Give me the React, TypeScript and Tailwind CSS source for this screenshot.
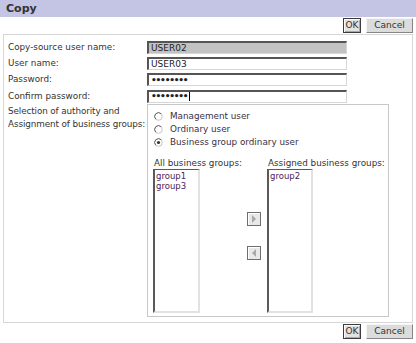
import React from "react";

function Btn({ label, primary, w }: { label: string; primary?: boolean; w: string }) {
    return (
        <div
            className={`${w} h-[15px] flex items-center justify-center text-[9px] leading-none text-[#333] ${
                primary
                    ? "border border-[#3c3c3c] bg-[#e2e2e2] shadow-[inset_1px_1px_0_#fafafa,inset_-1px_-1px_0_#a8a8a8]"
                    : "border border-t-[#f4f4f4] border-l-[#f4f4f4] border-r-[#858585] border-b-[#858585] bg-[#dcdcdc]"
            }`}
        >
            {label}
        </div>
    );
}

function ButtonRow({ className }: { className: string }) {
    return (
        <div className={`flex justify-end gap-[5px] pr-[3px] ${className}`}>
            <Btn label="OK" primary w="w-[18px]" />
            <Btn label="Cancel" w="w-[47px]" />
        </div>
    );
}

function Field({ value, gray, caret }: { value: string; gray?: boolean; caret?: boolean }) {
    return (
        <div
            className={`w-[200px] h-[13px] flex items-center pl-[2px] text-[9px] leading-none text-[#222] border-t-2 border-l-2 border-r border-b border-t-[#555] border-l-[#555] border-r-[#d6d6d6] border-b-[#d6d6d6] ${
                gray ? "bg-[#c2c2c2]" : "bg-white"
            }`}
        >
            <span className={value.startsWith("•") ? "tracking-[-1.2px] font-bold" : ""}>{value}</span>
            {caret && <span className="ml-[2px] w-px h-[9px] bg-black" />}
        </div>
    );
}

function Radio({ label, checked }: { label: string; checked?: boolean }) {
    return (
        <div className="h-[13px] flex items-center gap-[7px]">
            <svg width="9" height="9" viewBox="0 0 9 9">
                <circle cx="4.5" cy="4.5" r="3.8" fill="white" stroke="#c4c4c4" strokeWidth="1" />
                <path d="M1.8 7.2 A3.8 3.8 0 0 1 7.2 1.8" stroke="#666" fill="none" strokeWidth="1" />
                {checked && <circle cx="4.5" cy="4.5" r="1.6" fill="#333" />}
            </svg>
            <span className="text-[#3a3044]">{label}</span>
        </div>
    );
}

function ListBox({ items, w }: { items: string[]; w: string }) {
    return (
        <div
            className={`${w} h-[144px] border-t border-l-2 border-r-2 border-b-2 border-t-[#5a5a5a] border-l-[#5a5a5a] border-r-[#e2e2e2] border-b-[#e2e2e2] bg-white pl-[1px] pt-[1px]`}
        >
            {items.map((it) => (
                <div key={it} className="text-[8.5px] leading-[10px] text-[#4a2456]">
                    {it}
                </div>
            ))}
        </div>
    );
}

function Arrow({ dir }: { dir: "right" | "left" }) {
    return (
        <div className="w-[14px] h-[14px] border border-[#6e6e6e] bg-[#e8e8e8] flex items-center justify-center shadow-[inset_1px_1px_0_#fff]">
            <svg width="6" height="8" viewBox="0 0 6 8">
                {dir === "right" ? (
                    <polygon points="1,0 5,4 1,8" fill="#a8a8a8" />
                ) : (
                    <polygon points="5,0 1,4 5,8" fill="#a8a8a8" />
                )}
            </svg>
        </div>
    );
}

export default function App() {
    return (
        <div className="w-[416px] h-[343px] bg-white flex flex-col font-['DejaVu_Sans',sans-serif] text-[8.8px] text-[#333]">
            {/* Title */}
            <div className="h-[17px] bg-[#c4c4e4] pl-[6px] text-[11px] font-bold leading-[17px] text-[#333]">Copy</div>

            <ButtonRow className="mt-[1px]" />

            {/* Body */}
            <div className="mx-[3px] mt-[1px] h-[289px] border border-[#d6d6d6] pl-[4px] pt-[6px]">
                <div className="grid grid-cols-[139px_1fr] gap-y-[3px] items-center">
                    <div>Copy-source user name:</div>
                    <Field value="USER02" gray />
                    <div>User name:</div>
                    <Field value="USER03" />
                    <div>Password:</div>
                    <Field value="••••••••" />
                    <div>Confirm password:</div>
                    <Field value="••••••••" caret />
                </div>

                <div className="flex mt-[1px]">
                    <div className="w-[139px] pt-[1px] leading-[13px] whitespace-nowrap tracking-[-0.1px]">
                        Selection of authority and
                        <br />
                        Assignment of business groups:
                    </div>
                    <div className="w-[242px] h-[213px] border border-[#c8c8c8] pl-[6px] pt-[5px]">
                        <Radio label="Management user" />
                        <Radio label="Ordinary user" />
                        <Radio label="Business group ordinary user" checked />

                        <div className="grid grid-cols-[47px_67px_46px] grid-rows-[12px_144px] mt-[8px] -ml-[1px]">
                            <div className="whitespace-nowrap leading-[12px] pl-[1px]">All business groups:</div>
                            <div />
                            <div className="whitespace-nowrap leading-[12px] pl-[1px]">Assigned business groups:</div>
                            <ListBox items={["group1", "group3"]} w="w-[47px]" />
                            <div className="flex flex-col gap-[20px] pt-[43px] pl-[47px]">
                                <Arrow dir="right" />
                                <Arrow dir="left" />
                            </div>
                            <ListBox items={["group2"]} w="w-[46px]" />
                        </div>
                    </div>
                </div>
            </div>

            <ButtonRow className="mt-[1px]" />
        </div>
    );
}
